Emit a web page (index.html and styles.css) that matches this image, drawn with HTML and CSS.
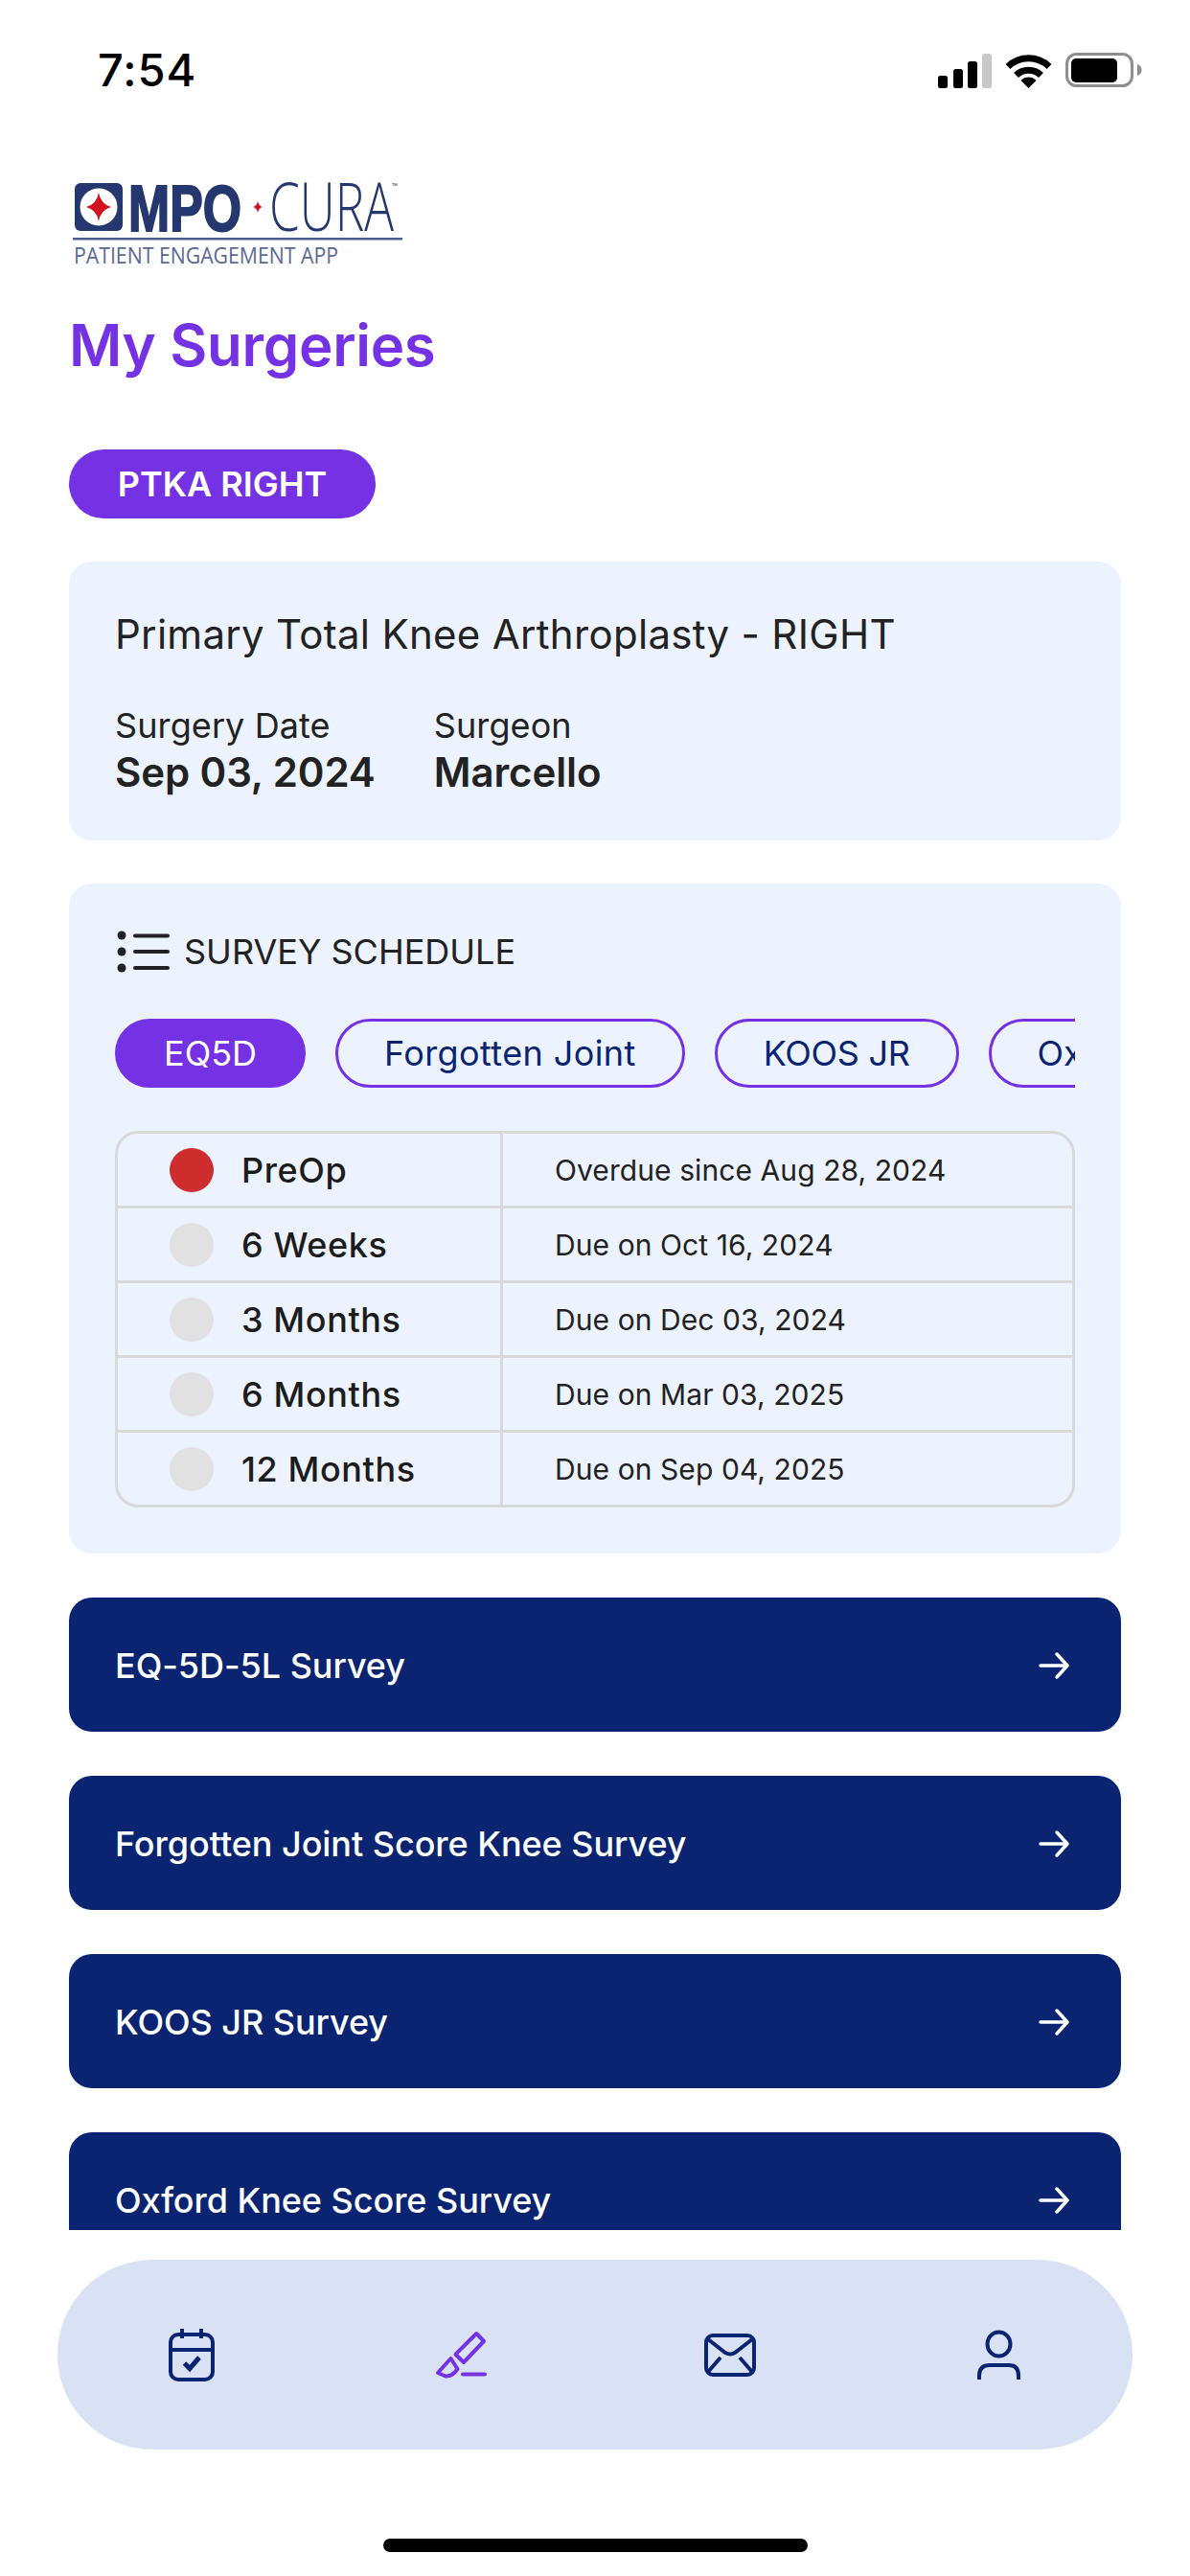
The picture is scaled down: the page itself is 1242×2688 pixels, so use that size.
FILE: index.html
```html
<!DOCTYPE html>
<html lang="en">
<head>
<meta charset="utf-8">
<title>My Surgeries</title>
<link rel="stylesheet" href="styles.css">
</head>
<body>
<div class="screen">
  <header class="status">
    <span class="time">7:54</span>
    <svg class="status-icons" width="216" height="40" viewBox="0 0 216 40">
      <rect x="0" y="24" width="10" height="13" rx="2.500" fill="#000"/>
      <rect x="16" y="17" width="10" height="20" rx="2.500" fill="#000"/>
      <rect x="31" y="9" width="10" height="28" rx="2.500" fill="#000"/>
      <rect x="46" y="1" width="10" height="36" rx="2.500" fill="#c8c8c8"/>
      <g transform="translate(71 1)">
        <path d="M2 13.500A31 31 0 0 1 45 13.500" fill="none" stroke="#000" stroke-width="7"/>
        <path d="M10.500 22.500A18.600 18.600 0 0 1 36.500 22.500" fill="none" stroke="#000" stroke-width="7"/>
        <path d="M23.500 36L15.500 28A11 11 0 0 1 31.500 28Z" fill="#000"/>
      </g>
      <rect x="134.500" y="1.500" width="68" height="33" rx="10" fill="none" stroke="#8e8e8e" stroke-width="3"/>
      <rect x="139" y="6" width="48" height="25" rx="5" fill="#000"/>
      <path d="M208 12C211 13 212.500 15 212.500 18S211 23 208 24Z" fill="#8e8e8e"/>
    </svg>
  </header>

  <main class="content">
    <svg class="logo" width="352" height="92" viewBox="0 0 352 92" role="img" aria-label="MPO CURA Patient Engagement App">
      <rect x="6" y="3" width="50" height="50" rx="6" fill="#25376f"/>
      <circle cx="31" cy="28" r="19.500" fill="#fff"/>
      <path d="M31 13Q33 25 44 28Q33 31 31 43Q29 31 18 28Q29 25 31 13Z" fill="#d2101e"/>
      <text class="logo-mpo" x="62" y="53" textLength="118" lengthAdjust="spacingAndGlyphs">MPO</text>
      <path d="M197 22Q198 27 202 28Q198 29 197 34Q196 29 192 28Q196 27 197 22Z" fill="#d2101e"/>
      <text class="logo-cura" x="209" y="53" textLength="130" lengthAdjust="spacingAndGlyphs">CURA</text>
      <text class="logo-tm" x="337" y="9">™</text>
      <rect x="4" y="60" width="344" height="2.500" fill="#4c5f90"/>
      <text class="logo-sub" x="5" y="87" textLength="276" lengthAdjust="spacingAndGlyphs">PATIENT ENGAGEMENT APP</text>
    </svg>

    <h1 class="title">My Surgeries</h1>
    <div class="pill">PTKA RIGHT</div>

    <section class="card card-surgery">
      <h2 class="surgery-name">Primary Total Knee Arthroplasty - RIGHT</h2>
      <div class="meta">
        <div class="meta-item"><span class="meta-label">Surgery Date</span><strong class="meta-value">Sep 03, 2024</strong></div>
        <div class="meta-item"><span class="meta-label">Surgeon</span><strong class="meta-value">Marcello</strong></div>
      </div>
    </section>

    <section class="card card-schedule">
      <div class="schedule-head">
        <svg width="56" height="44" viewBox="0 0 56 44">
          <circle cx="5" cy="5" r="4.500" fill="#222"/><circle cx="5" cy="22" r="4.500" fill="#222"/><circle cx="5" cy="39" r="4.500" fill="#222"/>
          <path d="M19 5.500H53M19 22H53M19 39H53" stroke="#222" stroke-width="4" stroke-linecap="round"/>
        </svg>
        <span>SURVEY SCHEDULE</span>
      </div>
      <div class="chips">
        <span class="chip chip-active">EQ5D</span>
        <span class="chip chip-wide">Forgotten Joint</span>
        <span class="chip chip-tight">KOOS JR</span>
        <span class="chip">Oxford</span>
      </div>
      <div class="table">
        <div class="row"><div class="cell-name"><i class="dot dot-red"></i><b>PreOp</b></div><div class="cell-date">Overdue since Aug 28, 2024</div></div>
        <div class="row"><div class="cell-name"><i class="dot"></i><b>6 Weeks</b></div><div class="cell-date">Due on Oct 16, 2024</div></div>
        <div class="row"><div class="cell-name"><i class="dot"></i><b>3 Months</b></div><div class="cell-date">Due on Dec 03, 2024</div></div>
        <div class="row"><div class="cell-name"><i class="dot"></i><b>6 Months</b></div><div class="cell-date">Due on Mar 03, 2025</div></div>
        <div class="row"><div class="cell-name"><i class="dot"></i><b>12 Months</b></div><div class="cell-date">Due on Sep 04, 2025</div></div>
      </div>
    </section>

    <a class="survey">EQ-5D-5L Survey<svg width="34" height="30" viewBox="0 0 34 30"><path d="M3 15H31M20 3L31 15L20 27" fill="none" stroke="#fff" stroke-width="3.500" stroke-linecap="round" stroke-linejoin="round"/></svg></a>
    <a class="survey">Forgotten Joint Score Knee Survey<svg width="34" height="30" viewBox="0 0 34 30"><path d="M3 15H31M20 3L31 15L20 27" fill="none" stroke="#fff" stroke-width="3.500" stroke-linecap="round" stroke-linejoin="round"/></svg></a>
    <a class="survey">KOOS JR Survey<svg width="34" height="30" viewBox="0 0 34 30"><path d="M3 15H31M20 3L31 15L20 27" fill="none" stroke="#fff" stroke-width="3.500" stroke-linecap="round" stroke-linejoin="round"/></svg></a>
    <a class="survey">Oxford Knee Score Survey<svg width="34" height="30" viewBox="0 0 34 30"><path d="M3 15H31M20 3L31 15L20 27" fill="none" stroke="#fff" stroke-width="3.500" stroke-linecap="round" stroke-linejoin="round"/></svg></a>
  </main>

  <nav class="tabbar">
    <svg width="60" height="60" viewBox="0 0 60 60" class="ico">
      <rect x="8" y="8" width="44" height="47" rx="8"/>
      <path d="M20 2V12M40 2V12M8 24H52"/>
      <path d="M22.500 38L28 43.500L38 32" stroke-width="5"/>
    </svg>
    <svg width="60" height="60" viewBox="0 0 60 60" class="ico ico-active">
      <path d="M24.500 28.700L46.300 7L54 15L33 37Z" stroke-linejoin="round"/>
      <path d="M6 48L19.500 33L26.500 44Q21 52 14 51.500Z" stroke-linejoin="round"/>
      <path d="M32 49.500H55" stroke-linecap="round"/>
    </svg>
    <svg width="60" height="60" viewBox="0 0 60 60" class="ico">
      <rect x="6" y="9" width="50" height="41" rx="7"/>
      <path d="M8 13L26 27Q31 30 36 27L54 13M8 47L21 32M54 47L41 32"/>
    </svg>
    <svg width="60" height="60" viewBox="0 0 60 60" class="ico">
      <ellipse cx="30.500" cy="18" rx="12" ry="12.500"/>
      <path d="M10 55V51Q10 40 21 40H41Q51 40 51 51V55"/>
    </svg>
  </nav>

  <div class="home-area"><div class="home-bar"></div></div>
</div>
</body>
</html>
```

FILE: styles.css
```css
* { box-sizing: border-box; }
html, body { margin: 0; padding: 0; background: #fff; }
body { font-family: Inter, "Liberation Sans", sans-serif; color: #222; }

.screen {
  width: 1242px;
  height: 2688px;
  display: flex;
  flex-direction: column;
  overflow: hidden;
  background: #fff;
}

.status {
  height: 146px;
  flex: none;
  display: flex;
  justify-content: space-between;
  align-items: flex-start;
  padding: 46px 47px 0 102px;
}
.time { font-size: 47px; line-height: 54px; font-weight: 500; color: #000; letter-spacing: 1px; }
.status-icons { margin-top: 9px; display: block; }

.content {
  height: 2181px;
  flex: none;
  overflow: hidden;
  padding: 42px 72px 0;
  display: flex;
  flex-direction: column;
}
.logo { display: block; flex: none; overflow: visible; }
.logo-mpo { font: 700 68px "Liberation Sans", sans-serif; fill: #25376f; stroke: #25376f; stroke-width: 2px; }
.logo-cura { font: 300 70px "Open Sans", sans-serif; fill: #25376f; }
.logo-tm { font: 400 8px "Open Sans", sans-serif; fill: #25376f; }
.logo-sub { font: 400 24px "Open Sans", sans-serif; fill: #5a6a93; }

.title {
  margin: 44px 0 0;
  font-size: 60px;
  line-height: 72px;
  font-weight: 600;
  letter-spacing: -0.3px;
  color: #7432e4;
}
.pill {
  margin-top: 73px;
  width: 320px;
  height: 72px;
  flex: none;
  border-radius: 36px;
  background: #7432e4;
  color: #fff;
  font-size: 36px;
  font-weight: 600;
  display: flex;
  align-items: center;
  justify-content: center;
}

.card { background: #ecf2fe; border-radius: 24px; flex: none; }
.card-surgery { margin-top: 45px; height: 291px; padding: 48px 48px 0; }
.surgery-name { margin: 0; font-size: 42px; line-height: 56px; font-weight: 400; color: #222; letter-spacing: 0.3px; }
.meta { display: flex; gap: 61px; margin-top: 44px; }
.meta-item { display: flex; flex-direction: column; }
.meta-label { font-size: 36px; line-height: 46px; color: #222; letter-spacing: 0.1px; }
.meta-value { font-size: 42px; line-height: 52px; font-weight: 600; color: #222; letter-spacing: -0.1px; }

.card-schedule { margin-top: 45px; padding: 46px 48px 48px; }
.schedule-head { display: flex; align-items: center; gap: 14px; height: 50px; font-size: 36px; color: #222; }
.schedule-head svg { display: block; margin-left: 2px; }
.chips { display: flex; gap: 31px; margin-top: 45px; overflow: hidden; height: 72px; }
.chip {
  flex: none;
  height: 72px;
  padding: 0 48px;
  border: 3px solid #7432e4;
  border-radius: 36px;
  font-size: 36px;
  color: #0a2472;
  display: flex;
  align-items: center;
}
.chip-active { background: #7432e4; color: #fff; }
.chip-wide { letter-spacing: 0.4px; }
.chip-tight { letter-spacing: -0.3px; }

.table {
  margin-top: 45px;
  border: 3px solid #d9d9d9;
  border-radius: 24px;
  overflow: hidden;
}
.row { display: grid; grid-template-columns: 402px 1fr; height: 78px; border-top: 3px solid #d9d9d9; }
.row:first-child { height: 75px; border-top: 0; }
.cell-name { display: flex; align-items: center; gap: 29px; padding-left: 54px; font-size: 36px; border-right: 3px solid #d9d9d9; }
.cell-name b { font-weight: 500; letter-spacing: 0.6px; color: #1c1c1c; }
.cell-date { display: flex; align-items: center; padding-left: 54px; font-size: 30px; letter-spacing: 0.08px; color: #222; }
.dot { width: 46px; height: 46px; border-radius: 50%; background: #e1e1e1; flex: none; display: block; }
.dot-red { background: #ce2d2d; }

.survey {
  margin-top: 46px;
  height: 140px;
  flex: none;
  background: #0a2472;
  border-radius: 24px;
  padding: 2px 53px 0 48px;
  display: flex;
  align-items: center;
  justify-content: space-between;
  color: #fff;
  font-size: 36px;
  font-weight: 500;
  letter-spacing: -0.05px;
}
.survey svg { display: block; }

.tabbar {
  margin: 31px 60px 0;
  height: 198px;
  flex: none;
  border-radius: 99px;
  background: #d9e2f5;
  padding-top: 2px;
  display: grid;
  grid-template-columns: repeat(4, 1fr);
  align-items: center;
  justify-items: center;
}
.ico { display: block; fill: none; stroke: #0a2472; stroke-width: 4; }
.ico-active { stroke: #7432e4; }

.home-area { flex: 1; display: flex; justify-content: center; padding-top: 93px; }
.home-bar { width: 443px; height: 14px; border-radius: 7px; background: #000; }
```
